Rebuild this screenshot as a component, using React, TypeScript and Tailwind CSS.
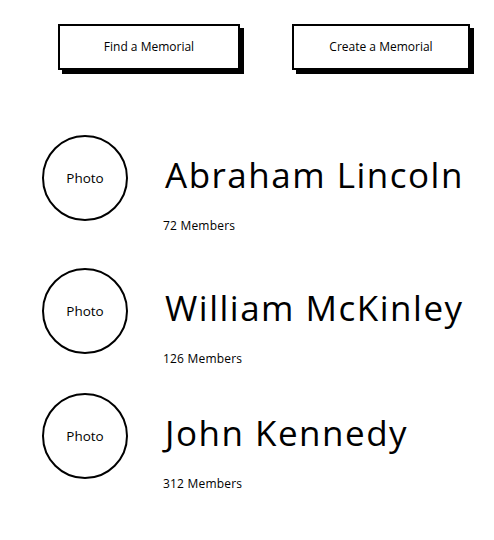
import React from 'react';

const people = [
  { name: 'Abraham Lincoln', members: 72, gap: 'mt-[65px]' },
  { name: 'William McKinley', members: 126, gap: 'mt-[34px]' },
  { name: 'John Kennedy', members: 312, gap: 'mt-[26px]' },
];

const SketchButton = ({ label, width }: { label: string; width: string }) => (
  <button
    className={`${width} h-[46px] border-2 border-black bg-white text-[12px] text-black shadow-[4px_4px_0_#000]`}
  >
    {label}
  </button>
);

export default function App() {
  return (
    <div
      className="w-[494px] h-[540px] bg-white text-black overflow-hidden"
      style={{ fontFamily: '"Open Sans", Lato, sans-serif' }}
    >
      <div className="flex gap-[52px] pl-[58px] pt-[24px]">
        <SketchButton label="Find a Memorial" width="w-[182px]" />
        <SketchButton label="Create a Memorial" width="w-[178px]" />
      </div>

      {people.map((p) => (
        <div key={p.name} className={`flex items-start pl-[42px] ${p.gap}`}>
          <div className="w-[86px] h-[86px] rounded-full border-2 border-black flex items-center justify-center text-[13.5px]">
            Photo
          </div>
          <div className="flex flex-col pl-[37px] pt-[20px]">
            <h2 className="text-[35px] leading-[40px] font-normal tracking-[1.5px]">{p.name}</h2>
            <p className="mt-[23px] -ml-[2px] text-[12px] leading-[16px] tracking-[0.2px]">{p.members} Members</p>
          </div>
        </div>
      ))}
    </div>
  );
}
